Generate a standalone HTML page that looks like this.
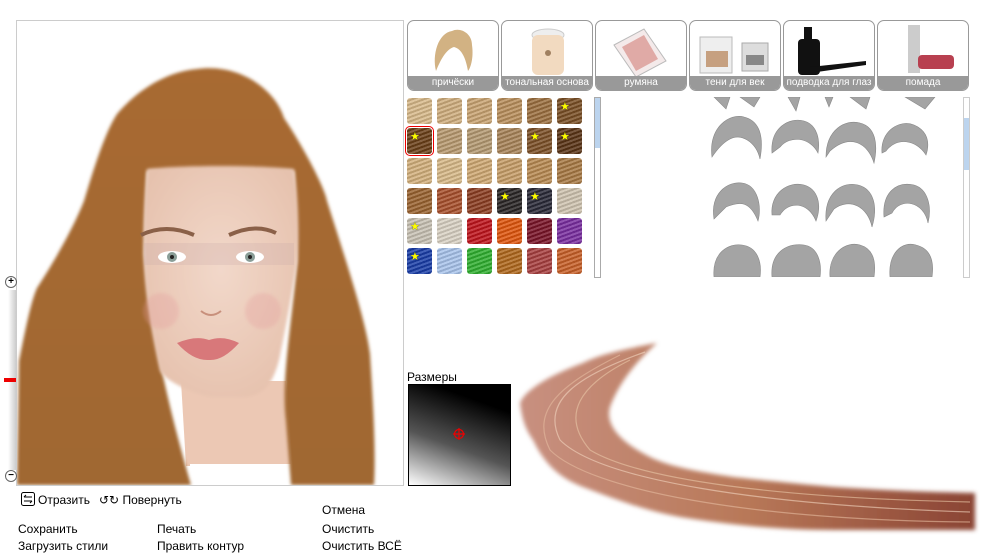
<!DOCTYPE html>
<html><head><meta charset="utf-8"><style>
body{margin:0;width:981px;height:559px;background:#fff;position:relative;overflow:hidden;font-family:"Liberation Sans","DejaVu Sans",sans-serif;font-size:12px;color:#000}
.a{position:absolute}
.tab{position:absolute;top:20px;width:90px;height:69px;border:1px solid #999;border-radius:7px;background:#fff;overflow:hidden}
.tab .l{position:absolute;left:0;right:0;bottom:0;height:14px;background:#999;color:#fff;font-size:10px;text-align:center;line-height:14px;white-space:nowrap}
.sw{position:absolute;width:25px;height:26px;border-radius:3px;background-image:repeating-linear-gradient(160deg,rgba(255,255,255,.18) 0 2px,rgba(0,0,0,.12) 2px 4px)}
.st{position:absolute;left:3px;top:2px;color:#ff0;font-size:11px;text-shadow:0 0 1px #000}
.t{position:absolute;font-size:12px;white-space:nowrap}
</style></head><body>
<!-- photo -->
<div class="a" style="left:16px;top:20px;width:386px;height:464px;border:1px solid #ccc;overflow:hidden;background:#fff">
<svg width="386" height="464" viewBox="16 20 386 464">
<defs><radialGradient id="sk" cx="50%" cy="45%" r="60%"><stop offset="0" stop-color="#f2d8ca"/><stop offset="1" stop-color="#e6c2ae"/></radialGradient>
<linearGradient id="hr" x1="0" y1="0" x2="0" y2="1"><stop offset="0" stop-color="#a86a30"/><stop offset="1" stop-color="#a06830"/></linearGradient>
<filter id="bl"><feGaussianBlur stdDeviation="1.5"/></filter></defs>
<path d="M180,380 L185,465 L290,465 L285,380Z" fill="#ecc8b4"/>
<path d="M189,463 L290,463 L290,484 L189,484Z" fill="#fff"/>
<path d="M196,68 C240,62 275,90 283,117 C305,150 325,190 326,200 C345,260 365,320 369,353 C372,400 375,450 373,484 L290,484 L285,420 C280,380 290,330 296,260 L293,170 L146,170 L143,253 C150,320 160,380 190,484 L16,484 L18,360 C24,330 30,300 36,287 C60,250 75,220 83,200 C95,160 105,130 116,113 C140,85 170,70 196,68Z" fill="url(#hr)" filter="url(#bl)"/>
<path d="M146,168 C180,164 260,164 293,168 C298,200 298,240 296,262 C290,300 282,340 279,355 C272,385 262,393 245,396 L210,396 C190,392 165,380 159,370 C150,330 143,290 143,253 C142,220 144,190 146,168Z" fill="url(#sk)" filter="url(#bl)"/>
<rect x="143" y="242" width="150" height="22" fill="#c9a8a6" opacity=".25"/>
<path d="M140,234 Q165,222 193,234" stroke="#8a6048" stroke-width="4" fill="none"/>
<path d="M228,234 Q255,222 275,232" stroke="#8a6048" stroke-width="4" fill="none"/>
<ellipse cx="171" cy="256" rx="14" ry="6" fill="#fff"/><circle cx="171" cy="256" r="5" fill="#8a9e98"/><circle cx="171" cy="256" r="2" fill="#222"/>
<ellipse cx="249" cy="256" rx="14" ry="6" fill="#fff"/><circle cx="249" cy="256" r="5" fill="#8a9e98"/><circle cx="249" cy="256" r="2" fill="#222"/>
<ellipse cx="160" cy="310" rx="18" ry="18" fill="#e49c9c" opacity=".3" filter="url(#bl)"/><ellipse cx="262" cy="310" rx="18" ry="18" fill="#e49c9c" opacity=".3" filter="url(#bl)"/>
<path d="M200,310 Q210,318 220,310" stroke="#c8907c" stroke-width="2" fill="none"/>
<path d="M176,342 Q195,334 208,339 Q222,334 238,342 Q222,360 208,359 Q192,360 176,342Z" fill="#d8787a"/>
</svg></div>
<!-- zoom slider -->
<div class="a" style="left:5px;top:276px;width:10px;height:10px;border:1px solid #666;border-radius:50%;font-size:10px;line-height:9px;text-align:center;font-weight:bold">+</div>
<div class="a" style="left:8px;top:290px;width:8px;height:180px;background:linear-gradient(90deg,#fff,#ccc)"></div>
<div class="a" style="left:4px;top:378px;width:12px;height:4px;background:#e00"></div>
<div class="a" style="left:5px;top:470px;width:10px;height:10px;border:1px solid #666;border-radius:50%;font-size:10px;line-height:9px;text-align:center;font-weight:bold">−</div>
<!-- tabs -->
<div class="tab" style="left:407px"><svg class="a" style="left:22px;top:4px" width="46" height="50"><path d="M6,46 C2,30 8,8 22,6 C30,2 42,8 42,20 C44,34 40,44 38,46 C36,34 32,24 24,22 C16,24 10,36 6,46Z" fill="#d2b283"/></svg><div class="l">причёски</div></div>
<div class="tab" style="left:501px"><svg class="a" style="left:26px;top:6px" width="40" height="50"><ellipse cx="20" cy="8" rx="16" ry="6" fill="#eee" stroke="#ccc"/><rect x="4" y="8" width="32" height="40" rx="6" fill="#f2dac0"/><circle cx="20" cy="26" r="3" fill="#a08060"/></svg><div class="l">тональная основа</div></div>
<div class="tab" style="left:595px"><svg class="a" style="left:14px;top:4px" width="60" height="54"><path d="M4,20 L34,4 L56,36 L26,52Z" fill="#f4eaea" stroke="#bbb"/><path d="M12,22 L34,10 L48,34 L26,46Z" fill="#e0aaa6"/></svg><div class="l">румяна</div></div>
<div class="tab" style="left:689px"><svg class="a" style="left:6px;top:6px" width="80" height="50"><rect x="4" y="10" width="32" height="36" fill="#eee" stroke="#bbb"/><rect x="10" y="24" width="22" height="16" fill="#c6a080"/><rect x="46" y="16" width="26" height="28" fill="#ddd" stroke="#aaa"/><rect x="50" y="28" width="18" height="10" fill="#888"/></svg><div class="l">тени для век</div></div>
<div class="tab" style="left:783px"><svg class="a" style="left:6px;top:4px" width="80" height="52"><rect x="14" y="2" width="8" height="12" fill="#111"/><rect x="8" y="14" width="22" height="36" rx="4" fill="#111"/><path d="M20,42 L76,36 L76,40 L20,48Z" fill="#111"/></svg><div class="l">подводка для глаз</div></div>
<div class="tab" style="left:877px"><svg class="a" style="left:20px;top:4px" width="60" height="54"><rect x="10" y="0" width="12" height="48" fill="#ccc"/><rect x="20" y="30" width="36" height="14" rx="4" fill="#b84050"/></svg><div class="l">помада</div></div>
<!-- swatches -->
<div class="a" style="left:406px;top:97px;width:190px;height:180px">
<div class="sw" style="left:1px;top:1px;background-color:#d8b98a"></div><div class="sw" style="left:31px;top:1px;background-color:#d0ae7e"></div><div class="sw" style="left:61px;top:1px;background-color:#c9a472"></div><div class="sw" style="left:91px;top:1px;background-color:#b98f5c"></div><div class="sw" style="left:121px;top:1px;background-color:#9c7040"></div><div class="sw" style="left:151px;top:1px;background-color:#7a4f25"><span class="st">★</span></div>
<div class="sw" style="left:1px;top:31px;background-color:#6b4018;outline:1px solid #e00;outline-offset:1px"><span class="st">★</span></div><div class="sw" style="left:31px;top:31px;background-color:#b89a70"></div><div class="sw" style="left:61px;top:31px;background-color:#b59a72"></div><div class="sw" style="left:91px;top:31px;background-color:#a88459"></div><div class="sw" style="left:121px;top:31px;background-color:#7d5128"><span class="st">★</span></div><div class="sw" style="left:151px;top:31px;background-color:#5a3416"><span class="st">★</span></div>
<div class="sw" style="left:1px;top:61px;background-color:#d3b07c"></div><div class="sw" style="left:31px;top:61px;background-color:#d8b988"></div><div class="sw" style="left:61px;top:61px;background-color:#cfa973"></div><div class="sw" style="left:91px;top:61px;background-color:#c79e68"></div><div class="sw" style="left:121px;top:61px;background-color:#b88a52"></div><div class="sw" style="left:151px;top:61px;background-color:#a87a44"></div>
<div class="sw" style="left:1px;top:91px;background-color:#9a6330"></div><div class="sw" style="left:31px;top:91px;background-color:#a8502c"></div><div class="sw" style="left:61px;top:91px;background-color:#8c3e22"></div><div class="sw" style="left:91px;top:91px;background-color:#2a2626"><span class="st">★</span></div><div class="sw" style="left:121px;top:91px;background-color:#2a2a38"><span class="st">★</span></div><div class="sw" style="left:151px;top:91px;background-color:#cfc4b0"></div>
<div class="sw" style="left:1px;top:121px;background-color:#c8c2b4"><span class="st">★</span></div><div class="sw" style="left:31px;top:121px;background-color:#d9d2c4"></div><div class="sw" style="left:61px;top:121px;background-color:#c0141c"></div><div class="sw" style="left:91px;top:121px;background-color:#e0550c"></div><div class="sw" style="left:121px;top:121px;background-color:#7a1428"></div><div class="sw" style="left:151px;top:121px;background-color:#7a2ea0"></div>
<div class="sw" style="left:1px;top:151px;background-color:#1a3ea8"><span class="st">★</span></div><div class="sw" style="left:31px;top:151px;background-color:#a8c4ec"></div><div class="sw" style="left:61px;top:151px;background-color:#30b030"></div><div class="sw" style="left:91px;top:151px;background-color:#b0681c"></div><div class="sw" style="left:121px;top:151px;background-color:#a84040"></div><div class="sw" style="left:151px;top:151px;background-color:#c86028"></div>
</div>
<div class="a" style="left:594px;top:97px;width:5px;height:179px;border:1px solid #aaa;background:#fff"><div style="height:50px;background:#bcd4ee"></div></div>
<!-- hairstyles -->
<svg class="a" style="left:700px;top:97px" width="260" height="180">
<g fill="#a4a4a4" stroke="#888" stroke-width=".6">
<path d="M14,0 h16 l-4,12Z M40,0 h20 l-6,10Z M88,0 h12 l-4,14Z M125,0 l4,10 l4,-10Z M150,0 h20 l-4,12Z M205,0 h30 l-10,12Z"/>
<path d="M12,60 C8,30 30,16 44,20 C60,24 64,40 60,62 C56,44 40,36 30,42 C22,46 16,54 12,60Z"/>
<path d="M72,56 C70,30 90,20 104,24 C118,28 120,44 118,56 C110,40 90,38 80,50Z"/>
<path d="M126,60 C126,32 146,22 160,26 C176,30 178,48 174,66 C168,46 150,36 130,54Z"/>
<path d="M182,56 C180,34 200,22 214,28 C228,34 230,46 226,58 C216,42 196,40 186,54Z"/>
<path d="M14,122 C10,96 28,84 42,86 C58,88 62,110 58,124 C50,104 40,104 26,110Z"/>
<path d="M72,118 C70,96 88,84 104,88 C118,92 122,108 116,124 C108,104 88,104 80,118Z"/>
<path d="M126,124 C124,96 142,84 158,88 C174,92 178,110 172,130 C168,110 150,100 134,112Z"/>
<path d="M184,120 C182,96 196,84 214,88 C228,92 232,110 228,126 C224,104 200,100 192,116Z"/>
<path d="M14,180 C12,156 28,146 42,148 C58,150 62,166 60,180Z"/>
<path d="M72,180 C70,156 86,146 104,148 C118,150 122,166 120,180Z"/>
<path d="M130,180 C128,156 146,144 160,148 C174,152 176,166 174,180Z"/>
<path d="M190,180 C188,156 202,144 216,148 C232,152 234,166 232,180Z"/>
</g></svg>
<div class="a" style="left:963px;top:97px;width:5px;height:179px;border:1px solid #ccc;background:#fff"><div style="margin-top:20px;height:52px;background:#bcd4ee"></div></div>
<!-- size -->
<div class="t" style="left:407px;top:370px">Размеры</div>
<div class="a" style="left:408px;top:384px;width:101px;height:100px;border:1px solid #000;background:linear-gradient(200deg,#000 20%,#555 60%,#fff 100%)"></div>
<svg class="a" style="left:453px;top:428px" width="12" height="12"><circle cx="6" cy="6" r="4.5" fill="none" stroke="#e00" stroke-width="1.2"/><path d="M6,0V12M0,6H12" stroke="#e00" stroke-width="1.2"/></svg>
<!-- strand -->
<svg class="a" style="left:500px;top:330px" width="481" height="229">
<defs><linearGradient id="st" x1="0" y1="0" x2="1" y2="0"><stop offset="0" stop-color="#c89080"/><stop offset=".5" stop-color="#b87858"/><stop offset="1" stop-color="#8a4434"/></linearGradient>
<filter id="sb"><feGaussianBlur stdDeviation="2"/></filter></defs>
<path d="M157,13 C130,18 100,24 83,33 C50,45 25,60 20,73 C22,90 26,100 33,110 C45,135 60,148 83,157 C130,175 160,185 200,190 C250,197 290,200 333,200 L475,200 L475,163 C420,162 380,160 333,157 C300,154 260,150 233,147 C200,142 170,137 150,127 C120,112 105,95 110,77 C120,50 140,28 157,13Z" fill="url(#st)" filter="url(#sb)"/>
<g fill="none" stroke-width="1.2" opacity=".6">
<path d="M145,22 C80,45 40,70 60,110 C100,150 260,175 470,182" stroke="#f3d6c0"/>
<path d="M130,30 C80,55 60,85 90,120 C140,150 280,168 470,172" stroke="#eac8a8"/>
<path d="M120,25 C60,55 30,80 50,120 C90,160 250,190 470,192" stroke="#e6bca0"/>
</g>
</svg>
<!-- bottom controls -->
<svg class="a" style="left:21px;top:492px" width="14" height="14"><rect x="0.5" y="0.5" width="13" height="13" rx="2" fill="none" stroke="#000"/><path d="M3,5H11M3,5L5,3M11,9H3M11,9L9,11" stroke="#000" fill="none"/></svg>
<div class="t" style="left:38px;top:493px">Отразить</div>
<div class="t" style="left:99px;top:493px">↺↻ Повернуть</div>
<div class="t" style="left:322px;top:503px">Отмена</div>
<div class="t" style="left:18px;top:522px">Сохранить</div>
<div class="t" style="left:157px;top:522px">Печать</div>
<div class="t" style="left:322px;top:522px">Очистить</div>
<div class="t" style="left:18px;top:539px">Загрузить стили</div>
<div class="t" style="left:157px;top:539px">Править контур</div>
<div class="t" style="left:322px;top:539px">Очистить ВСЁ</div>
</body></html>
